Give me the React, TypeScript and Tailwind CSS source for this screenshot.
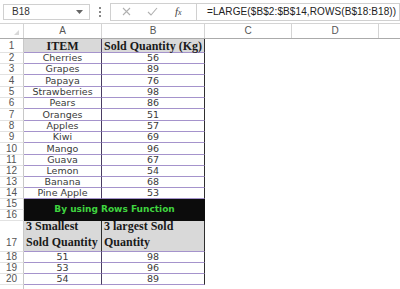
import React from 'react';

const sans = { fontFamily: '"DejaVu Sans", Verdana, sans-serif' };

const fruits: [string, number, boolean][] = [
    ['Cherries', 56, false],
    ['Grapes', 89, false],
    ['Papaya', 76, true],
    ['Strawberries', 98, false],
    ['Pears', 86, false],
    ['Oranges', 51, true],
    ['Apples', 57, false],
    ['Kiwi', 69, false],
    ['Mango', 96, true],
    ['Guava', 67, false],
    ['Lemon', 54, false],
    ['Banana', 68, false],
    ['Pine Apple', 53, false],
];

const results: [number, number][] = [
    [51, 98],
    [53, 96],
    [54, 89],
];

const RowNum = ({ n, className = '' }: { n?: number; className?: string }) => (
    <div
        className={`w-[24px] shrink-0 flex justify-center border-r border-b border-r-[#c8c8c8] border-b-[#e2e2e2] bg-white text-[10px] leading-none text-[#555] font-['Liberation_Sans',Arial,sans-serif] ${className}`}
    >
        {n}
    </div>
);

const DataRow = ({ n, a, b, tall }: { n: number; a: string | number; b: string | number; tall?: boolean }) => (
    <div className={`flex ${tall ? 'h-[12px]' : 'h-[11px]'}`}>
        <RowNum n={n} className="items-center" />
        <div
            className="w-[78px] shrink-0 flex items-center justify-center border-b border-r border-b-[#a593cc] border-r-[#4a3d63] text-[9.5px] leading-none text-[#3a3a3a]"
            style={sans}
        >
            {a}
        </div>
        <div
            className="w-[103px] shrink-0 flex items-center justify-center border-b border-r border-b-[#a593cc] border-r-[#2e2e2e] text-[9.5px] leading-none text-[#3a3a3a]"
            style={sans}
        >
            {b}
        </div>
        <div className="flex-1 bg-white" />
    </div>
);

export default function App() {
    return (
        <div className="w-[400px] h-[289px] overflow-hidden bg-white select-none">
            {/* Formula bar */}
            <div className="h-[24px] flex items-center border-b border-[#d4d4d4] bg-white font-['Liberation_Sans',Arial,sans-serif]">
                <div className="ml-[3px] w-[87px] h-[16px] flex items-center justify-between border border-[#d0d0d0] pl-[8px] pr-[6px] text-[10px] text-[#333]">
                    <span>B18</span>
                    <svg width="7" height="4" viewBox="0 0 7 4">
                        <path d="M0 0 L7 0 L3.5 4 Z" fill="#666" />
                    </svg>
                </div>
                <div className="w-[20px] flex flex-col items-center gap-[2px]">
                    <span className="w-[2px] h-[2px] bg-[#888]" />
                    <span className="w-[2px] h-[2px] bg-[#888]" />
                    <span className="w-[2px] h-[2px] bg-[#888]" />
                </div>
                <div className="w-[87px] h-[18px] flex items-center border border-[#d0d0d0] bg-white">
                    <svg className="ml-[11px]" width="9" height="9" viewBox="0 0 9 9">
                        <path d="M1 1 L8 8 M8 1 L1 8" stroke="#b0b0b0" strokeWidth="1.1" />
                    </svg>
                    <svg className="ml-[16px]" width="11" height="9" viewBox="0 0 11 9">
                        <path d="M1 5 L4 8 L10 1" stroke="#b0b0b0" strokeWidth="1.1" fill="none" />
                    </svg>
                    <span className="ml-[17px] text-[11px] italic text-[#444] font-['Liberation_Serif',serif]">
                        f<span className="text-[8px]">x</span>
                    </span>
                </div>
                <div className="flex-1 h-[18px] flex items-center border border-l-0 border-[#d0d0d0] pl-[10px] text-[10px] tracking-[0.1px] text-[#222] whitespace-nowrap overflow-hidden">
                    =LARGE($B$2:$B$14,ROWS(B$18:B18))
                </div>
            </div>

            {/* Column headers */}
            <div className="flex h-[15px] border-b border-[#ababab] bg-white text-[10px] leading-none text-[#555] font-['Liberation_Sans',Arial,sans-serif]">
                <div className="w-[24px] shrink-0 flex items-end justify-end border-r border-[#d4d4d4] pr-[4px] pb-[3px]">
                    <svg width="5" height="5" viewBox="0 0 5 5">
                        <path d="M5 0 L5 5 L0 5 Z" fill="#d8d8d8" />
                    </svg>
                </div>
                <div className="w-[78px] shrink-0 flex items-center justify-center border-r border-[#d4d4d4]">A</div>
                <div className="w-[103px] shrink-0 flex items-center justify-center border-r border-[#d4d4d4]">B</div>
                <div className="w-[87px] shrink-0 flex items-center justify-center border-r border-[#d4d4d4]">C</div>
                <div className="w-[87px] shrink-0 flex items-center justify-center border-r border-[#d4d4d4]">D</div>
                <div className="flex-1" />
            </div>

            {/* Row 1 header */}
            <div className="flex h-[14px]">
                <RowNum n={1} className="items-center" />
                <div className="w-[78px] shrink-0 flex items-center justify-center border-b border-r border-b-[#a593cc] border-r-[#4a3d63] bg-[#d9d9d9] text-[12px] leading-none font-bold text-[#1a1a1a] font-['Liberation_Serif',serif]">
                    ITEM
                </div>
                <div className="w-[103px] shrink-0 flex items-center justify-center border-b border-r border-b-[#a593cc] border-r-[#2e2e2e] bg-[#d9d9d9] text-[12px] leading-none font-bold text-[#1a1a1a] font-['Liberation_Serif',serif] whitespace-nowrap">
                    Sold Quantity (Kg)
                </div>
                <div className="flex-1" />
            </div>

            {fruits.map(([name, qty, tall], i) => (
                <DataRow key={name} n={i + 2} a={name} b={qty} tall={tall} />
            ))}

            {/* Rows 15-16 merged banner */}
            <div className="flex h-[22px]">
                <div className="flex flex-col">
                    <RowNum n={15} className="h-[11px] items-center" />
                    <RowNum n={16} className="h-[11px] items-center" />
                </div>
                <div
                    className="w-[181px] shrink-0 flex items-center justify-center bg-[#0c0c0c] text-[9px] font-bold text-[#3fd43f] whitespace-nowrap"
                    style={sans}
                >
                    By using Rows Function
                </div>
                <div className="flex-1" />
            </div>

            {/* Row 17 result headers */}
            <div className="flex h-[31px]">
                <RowNum n={17} className="items-end pb-[3px]" />
                <div className="w-[78px] shrink-0 flex items-end border-b border-r border-b-[#a593cc] border-r-[#2e2e2e] bg-[#d9d9d9] pl-[2px] pb-[1px] text-[12px] leading-[16px] font-bold text-[#1a1a1a] font-['Liberation_Serif',serif] whitespace-nowrap">
                    <span>
                        3 Smallest
                        <br />
                        Sold Quantity
                    </span>
                </div>
                <div className="w-[103px] shrink-0 flex items-end border-b border-r border-b-[#a593cc] border-r-[#2e2e2e] bg-[#d9d9d9] pl-[2px] pb-[1px] text-[12px] leading-[16px] font-bold text-[#1a1a1a] font-['Liberation_Serif',serif] whitespace-nowrap">
                    <span>
                        3 largest Sold
                        <br />
                        Quantity
                    </span>
                </div>
                <div className="flex-1" />
            </div>

            {results.map(([s, l], i) => (
                <DataRow key={i} n={i + 18} a={s} b={l} />
            ))}

            {/* Row 21 (cut off at the window edge) */}
            <div className="flex h-[11px]">
                <RowNum className="items-center" />
                <div className="flex-1" />
            </div>
        </div>
    );
}
